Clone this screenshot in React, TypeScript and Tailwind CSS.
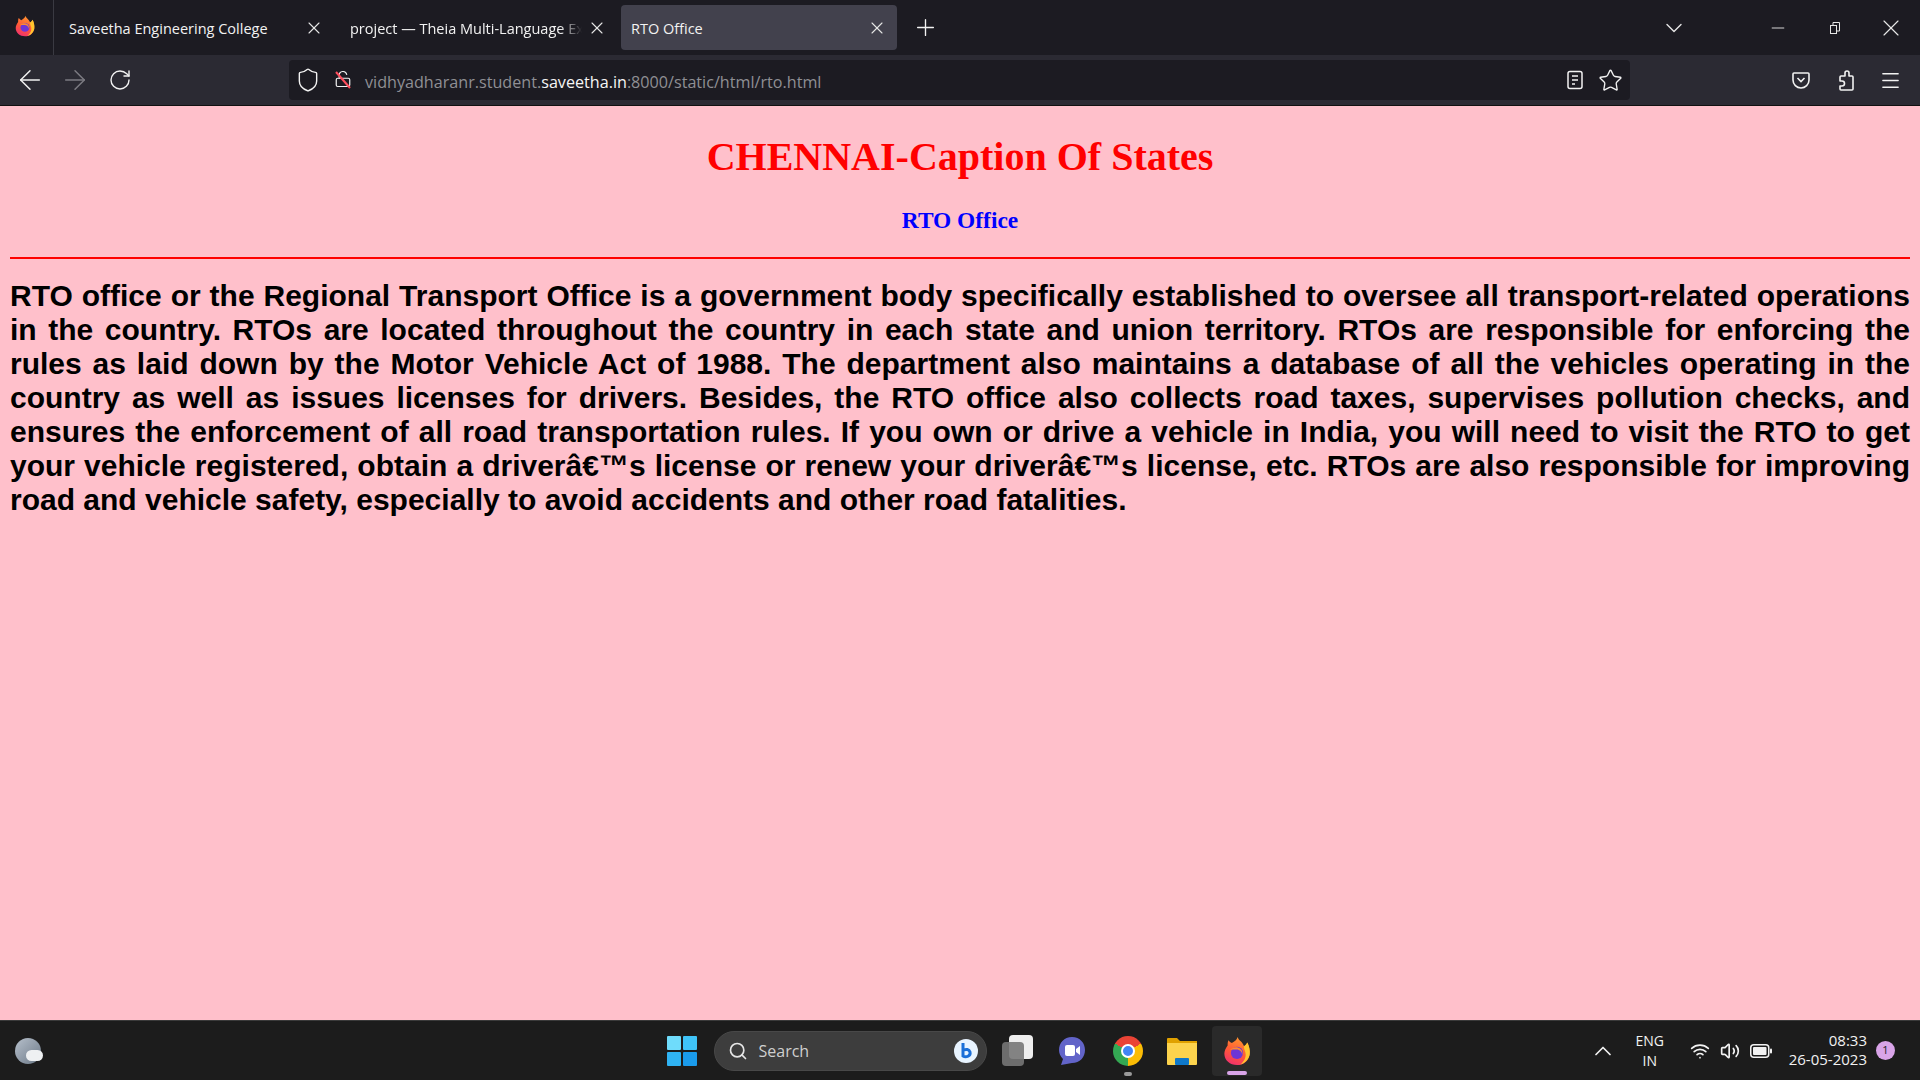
import { ArrowLeft, ArrowRight, RotateCw, Shield, LockOpen, X, Plus, ChevronDown, ChevronUp, Minus, Star, Menu, Search, Wifi, Volume2 } from "lucide-react";

const sans = { fontFamily: "'Open Sans', 'Noto Sans', sans-serif" };

function FirefoxLogo({ size }: { size: number }) {
  return (
    <svg width={size} height={size} viewBox="0 0 32 32">
      <defs>
        <linearGradient id="ffBody" x1="0.7" y1="0" x2="0.3" y2="1">
          <stop offset="0" stopColor="#ff9a2e" />
          <stop offset="0.55" stopColor="#ff5a36" />
          <stop offset="1" stopColor="#f0306e" />
        </linearGradient>
      </defs>
      <path d="M27 7c-1 2-2 3-3.500 4C22 6 18 5 16.500 1c-.5 3-3 4.500-6 6.500C9 7 8 6 7 4.500 6 6 6 8 6 10c-2 3-3.500 5.500-3.500 9 0 7 6 12 13.500 12s13.500-5.500 13.500-13c0-4-1-8-2.500-11z" fill="url(#ffBody)" />
      <path d="M27 7c2 4 3.200 8 2.600 12.500C29 24 25 29 19.500 30.500c5-4 7-9 5-14.500-.8-2-1.300-3.500-1-5 1.500-1 2.500-2 3.500-4z" fill="#ffc52e" />
      <circle cx="16" cy="18" r="6.500" fill="#6e35d6" />
      <path d="M8.500 15c3-3 6-3.500 9-2.500 3.500 1.200 5 4.500 4 8 .2-3.500-2.500-6-6-6-2.500 0-5 0-7 .5z" fill="#ff8a2e" />
    </svg>
  );
}

export default function App() {
  return (
    <div className="flex flex-col w-[1920px] h-[1080px] overflow-hidden bg-[#ffc0cb]">
      {/* Tab strip */}
      <div style={sans} className="flex items-center h-[55px] bg-[#1c1b22] text-[#f2f2f2]">
        <div className="flex items-center justify-center w-[54px] h-full border-r border-[#3a3a42] pb-[3px] pr-[3px]">
          <FirefoxLogo size={22} />
        </div>
        <div className="flex items-center">
          <div className="flex items-center w-[276px] h-[45px] pl-[15px] pr-[6px]">
            <span className="flex-1 pt-[2px] whitespace-nowrap text-[14.5px]">Saveetha Engineering College</span>
            <X size={20} strokeWidth={1.3} className="text-[#e6e6e6] shrink-0" />
          </div>
          <div className="flex items-center w-[291px] h-[45px] pl-[20px] pr-[14px]">
            <span className="flex-1 pt-[2px] overflow-hidden whitespace-nowrap text-[14.5px] [mask-image:linear-gradient(to_left,transparent,black_22px)]">project — Theia Multi-Language Ex</span>
            <X size={20} strokeWidth={1.3} className="text-[#e6e6e6] shrink-0 ml-[5px]" />
          </div>
          <div className="flex items-center w-[276px] h-[45px] rounded bg-[#42414d] pl-[10px] pr-[10px]">
            <span className="flex-1 pt-[2px] whitespace-nowrap text-[14.5px]">RTO Office</span>
            <X size={20} strokeWidth={1.3} className="text-[#e6e6e6] shrink-0" />
          </div>
        </div>
        <Plus size={27} strokeWidth={1.2} className="ml-[15px] text-[#f2f2f2]" />
        <div className="flex-1" />
        <ChevronDown size={28} strokeWidth={1.2} className="text-[#e6e6e6] mr-[80px]" />
        <Minus size={20} strokeWidth={1.1} className="text-[#e6e6e6] mr-[40px]" />
        <svg width="14" height="14" viewBox="0 0 14 14" fill="none" stroke="#e6e6e6" className="mr-[35px]">
          <rect x="2.500" y="4.500" width="6" height="8" />
          <path d="M5 4V1.500h6.500V10H9" />
        </svg>
        <X size={28} strokeWidth={1} className="text-[#e6e6e6] mr-[15px]" />
      </div>

      {/* Toolbar */}
      <div className="flex items-center h-[51px] bg-[#2b2a33] border-b border-[#111] text-[#f2f2f2]">
        <ArrowLeft size={32} strokeWidth={1.1} className="ml-[14px]" />
        <ArrowRight size={32} strokeWidth={1.1} className="ml-[13px] text-[#7c7b82]" />
        <RotateCw size={24} strokeWidth={1.4} className="ml-[17px]" />
        <div className="flex items-center ml-[157px] w-[1341px] h-[40px] rounded bg-[#1c1b22]">
          <Shield size={26} strokeWidth={1.3} className="ml-[6px]" />
          <div className="relative ml-[13px] w-[20px] h-[20px]">
            <LockOpen size={18} strokeWidth={1.6} />
            <svg className="absolute left-0 top-0" width="20" height="20" viewBox="0 0 20 20"><path d="M2 2l14 16" stroke="#ff4f5e" strokeWidth="2" /></svg>
          </div>
          <span style={sans} className="ml-[11px] pt-[4px] text-[16.15px] text-[#8f8f94] whitespace-nowrap">
            vidhyadharanr.student.<span className="text-[#f5f5f5]">saveetha.in</span>:8000/static/html/rto.html
          </span>
          <div className="flex-1" />
          <svg width="18" height="20" viewBox="0 0 18 20" fill="none" stroke="#f2f2f2" strokeWidth="1.5" className="mr-[14px]">
            <rect x="2" y="1.500" width="14" height="17" rx="2" />
            <path d="M6 6h6M6 10h6M6 14h3" />
          </svg>
          <Star size={25} strokeWidth={1.3} className="mr-[7px]" />
        </div>
        <div className="flex-1" />
        <svg width="20" height="20" viewBox="0 0 20 20" fill="none" stroke="#f2f2f2" strokeWidth="1.6" className="mr-[25px]">
          <path d="M3 3h14a1 1 0 0 1 1 1v6a8 8 0 0 1-16 0V4a1 1 0 0 1 1-1z" />
          <path d="M6.500 8l3.500 3.500L13.500 8" />
        </svg>
        <svg width="20" height="22" viewBox="0 0 20 22" fill="none" stroke="#f2f2f2" strokeWidth="1.6" strokeLinejoin="round" className="mr-[23px]">
          <path d="M9 7V4a2 2 0 0 1 4 0v3h3a1 1 0 0 1 1 1v12a1 1 0 0 1-1 1H5a1 1 0 0 1-1-1v-3h2a2 2 0 0 0 0-5H4V8a1 1 0 0 1 1-1z" />
        </svg>
        <Menu size={23} strokeWidth={1.4} className="mr-[18px]" />
      </div>

      {/* Page */}
      <main className="flex-1 px-[10px] bg-[#ffc0cb]">
        <h1 style={{ fontFamily: "'Liberation Serif', serif" }} className="mt-[28px] text-center text-[40px] leading-[46px] font-bold text-[#ff0000]">
          CHENNAI-Caption Of States
        </h1>
        <h3 style={{ fontFamily: "'Liberation Serif', serif" }} className="mt-[27px] text-center text-[23.4px] leading-[27px] font-bold text-[#0000ff]">
          RTO Office
        </h3>
        <hr className="mt-[23px] border-t-2 border-[#ff0000]" />
        <p style={{ fontFamily: "'Liberation Sans', sans-serif" }} className="mt-[20px] text-[30px] leading-[34px] font-bold text-black text-justify">
          RTO office or the Regional Transport Office is a government body specifically established to oversee all transport-related operations in the country. RTOs are located throughout the country in each state and union territory. RTOs are responsible for enforcing the rules as laid down by the Motor Vehicle Act of 1988. The department also maintains a database of all the vehicles operating in the country as well as issues licenses for drivers. Besides, the RTO office also collects road taxes, supervises pollution checks, and ensures the enforcement of all road transportation rules. If you own or drive a vehicle in India, you will need to visit the RTO to get your vehicle registered, obtain a driverâ€™s license or renew your driverâ€™s license, etc. RTOs are also responsible for improving road and vehicle safety, especially to avoid accidents and other road fatalities.
        </p>
      </main>

      {/* Taskbar */}
      <div style={sans} className="relative flex items-center h-[60px] bg-[#1c1c1c] border-t border-[#3a3a3a] text-[#f2f2f2]">
        <div className="relative ml-[15px] w-[26px] h-[26px] rounded-full bg-gradient-to-br from-[#b7c0cb] to-[#6d7a89]">
          <div className="absolute left-[11px] top-[12px] w-[17px] h-[11px] rounded-full bg-[#eef0f2]" />
        </div>
        <div className="flex-1 flex items-center justify-center pr-[33px]">
          <svg width="30" height="30" viewBox="0 0 30 30" className="mr-[17px]">
            <rect x="0" y="0" width="14" height="14" rx="1" fill="#6fdcfb" />
            <rect x="16" y="0" width="14" height="14" rx="1" fill="#3fc4f8" />
            <rect x="0" y="16" width="14" height="14" rx="1" fill="#2fb3f3" />
            <rect x="16" y="16" width="14" height="14" rx="1" fill="#1a9bec" />
          </svg>
          <div className="flex items-center w-[273px] h-[40px] rounded-full bg-[#3d3d3d] border border-[#484848]">
            <Search size={20} className="ml-[13px] text-[#e6e6e6]" />
            <span className="ml-[11px] text-[16px] text-[#cfcfcf]">Search</span>
            <div className="flex-1" />
            <div className="flex items-center justify-center w-[24px] h-[24px] mr-[8px] rounded-full bg-[#e8f4ff]">
              <svg width="16" height="18" viewBox="0 0 16 18" fill="none" stroke="#1b6fd8" strokeWidth="3"><path d="M5 1v13c3 2 8 0 7-4-1-3-4-3-6-2" /></svg>
            </div>
          </div>
          <div className="relative ml-[15px] w-[31px] h-[31px]">
            <div className="absolute right-0 top-0 w-[24px] h-[24px] rounded-sm bg-[#eeeeee]" />
            <div className="absolute left-0 bottom-0 w-[22px] h-[24px] rounded-sm bg-[#777777]/90" />
          </div>
          <svg width="30" height="32" viewBox="0 0 30 32" className="ml-[24px]">
            <path d="M15 2c8 0 13 6 13 13s-5 13-13 13l-11 2 2-6C3 21 2 18 2 15 2 8 7 2 15 2z" fill="#6264c9" />
            <rect x="8" y="10" width="10" height="11" rx="2" fill="#fff" />
            <path d="M19 14l4-3v9l-4-3z" fill="#fff" />
          </svg>
          <div className="relative ml-[26px] w-[30px] h-[30px] rounded-full bg-[conic-gradient(from_-60deg,#ea4335_0deg_120deg,#fbbc05_120deg_240deg,#34a853_240deg_360deg)]">
            <div className="absolute left-[8px] top-[8px] w-[14px] h-[14px] rounded-full bg-[#4285f4] border-2 border-white" />
            <div className="absolute left-[11px] top-[36px] w-[8px] h-[4px] rounded-full bg-[#9a9a9a]" />
          </div>
          <svg width="30" height="30" viewBox="0 0 30 30" className="ml-[24px]">
            <path d="M0 3a1 1 0 0 1 1-1h9l3 3h17v4H0z" fill="#e0a100" />
            <path d="M0 7h30v21a1 1 0 0 1-1 1H1a1 1 0 0 1-1-1z" fill="#fcd34d" />
            <rect x="8" y="22" width="14" height="7" rx="1" fill="#0f78c9" />
          </svg>
          <div className="relative flex items-center justify-center ml-[15px] w-[50px] h-[50px] rounded bg-[#2a2a2a]">
            <FirefoxLogo size={30} />
            <div className="absolute left-[15px] bottom-[1px] w-[20px] h-[4px] rounded-full bg-[#d9a4e8]" />
          </div>
        </div>
        <div className="absolute right-0 top-0 h-full flex items-center">
          <ChevronUp size={28} strokeWidth={1.5} className="mr-[13px]" />
          <div className="w-[40px] text-center text-[14px] leading-[20px] mr-[20px]">ENG<br />IN</div>
          <Wifi size={20} className="mr-[10px]" />
          <Volume2 size={20} className="mr-[10px]" />
          <svg width="22" height="14" viewBox="0 0 22 14" fill="none" className="mr-[17px]">
            <rect x="0.750" y="0.750" width="18" height="12.500" rx="3" stroke="#f2f2f2" strokeWidth="1.500" />
            <rect x="3" y="3" width="13.500" height="8" rx="1" fill="#f2f2f2" />
            <rect x="20" y="4.500" width="2" height="5" rx="1" fill="#f2f2f2" />
          </svg>
          <div className="text-right text-[15px] leading-[19px] mr-[9px] -mt-[2px]">08:33<br />26-05-2023</div>
          <div className="flex items-center justify-center w-[19px] h-[19px] mr-[25px] rounded-full bg-[#d9a4e8] text-[#1c1c1c] text-[11px]">1</div>
        </div>
      </div>
    </div>
  );
}
